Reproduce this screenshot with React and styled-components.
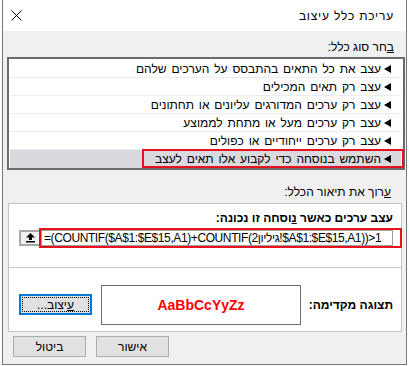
import React from 'react';
import styled, { createGlobalStyle } from 'styled-components';

const GlobalStyle = createGlobalStyle`
  html, body {
    margin: 0;
    padding: 0;
    background: #ffffff;
  }
  body {
    font-family: "Liberation Sans", Arial, sans-serif;
    font-size: 12px;
    color: #000;
  }
`;

const ruleTypes = [
  'עצב את כל התאים בהתבסס על הערכים שלהם',
  'עצב רק תאים המכילים',
  'עצב רק ערכים המדורגים עליונים או תחתונים',
  'עצב רק ערכים מעל או מתחת לממוצע',
  'עצב רק ערכים ייחודיים או כפולים',
  'השתמש בנוסחה כדי לקבוע אלו תאים לעצב',
];

const Screen = styled.div`
  width: 409px;
  height: 366px;
  overflow: hidden;
  padding-left: 2px;
  box-sizing: border-box;
  background: #fff;
`;

const Dialog = styled.div`
  direction: rtl;
  width: 405px;
  height: 365px;
  box-sizing: border-box;
  border: 1px solid #777777;
  border-top: none;
  background: #f0f0f0;
  display: flex;
  flex-direction: column;
`;

const TitleBar = styled.div`
  height: 31px;
  flex-shrink: 0;
  background: #ffffff;
  display: flex;
  align-items: center;
  justify-content: space-between;
  padding: 0 12px 0 8px;
`;

const Title = styled.span`
  font-size: 12px;
  line-height: 16px;
  letter-spacing: 0.8px;
`;

const CloseIcon = () => (
  <svg width="11" height="11" viewBox="0 0 11 11">
    <path d="M0.5 0.5 L10.5 10.5 M10.5 0.5 L0.5 10.5" stroke="#000" strokeWidth="1" />
  </svg>
);

const SectionLabel = styled.div`
  line-height: 16px;
  margin: ${p => p.top}px ${p => p.right}px 0 0;
`;

const ListBox = styled.div`
  margin: 2px 1px 0 4px;
  height: 113px;
  box-sizing: border-box;
  border: 2px solid #6b6b6b;
  background: #ffffff;
  padding: 1px 2px 0 1px;
`;

const Row = styled.div`
  height: 18px;
  box-sizing: border-box;
  display: flex;
  align-items: stretch;
  background: ${p => (p.selected ? '#d9d9de' : 'transparent')};
  border-bottom: 1px solid ${p => (p.last ? 'transparent' : '#ededed')};
`;

const Item = styled.span`
  display: inline-flex;
  align-items: center;
  gap: 3px;
  box-sizing: border-box;
  height: 19px;
  margin: -1px -3px 0 0;
  padding: 0 11px;
  border: 2px solid ${p => (p.marked ? '#e8121f' : 'transparent')};
  white-space: nowrap;
  word-spacing: 1.5px;
`;

const Bullet = styled.span`
  width: 0;
  height: 0;
  border-top: 4px solid transparent;
  border-bottom: 4px solid transparent;
  border-right: 7px solid #000;
`;

const Panel = styled.div`
  margin: 3px 4px 0 5px;
  height: 129px;
  box-sizing: border-box;
  border: 1px solid #c2c2c2;
  background: #ffffff;
  display: flex;
  flex-direction: column;
`;

const PanelTop = styled.div`
  padding: 6px 8px 0 10px;
  height: 64px;
  box-sizing: border-box;
  border-bottom: 1px solid #c8c8c8;
`;

const Bold = styled.div`
  font-weight: bold;
  line-height: 16px;
`;

const FormulaRow = styled.div`
  position: relative;
  margin: 4px 0 0 0;
  display: flex;
  height: 16px;
`;

const FormulaInput = styled.div`
  flex: 1;
  min-width: 0;
  direction: ltr;
  box-sizing: border-box;
  border: 1px solid #a0a0a0;
  background: #fff;
  padding-left: 2px;
  line-height: 14px;
  letter-spacing: -0.4px;
  white-space: nowrap;
  overflow: hidden;
`;

const CollapseButton = styled.div`
  width: 22px;
  flex-shrink: 0;
  box-sizing: border-box;
  border: 2px solid #a8a8a8;
  background: #f0f0f0;
  display: flex;
  align-items: center;
  justify-content: center;
`;

const Highlight = styled.span`
  position: absolute;
  top: -2px;
  bottom: -2px;
  right: -9px;
  left: 20px;
  border: 2px solid #e8121f;
  pointer-events: none;
`;

const PanelBottom = styled.div`
  flex: 1;
  display: flex;
  align-items: flex-start;
  padding: 17px 8px 0 10px;
`;

const PreviewLabel = styled.div`
  width: 92px;
  height: 40px;
  display: flex;
  align-items: center;
  font-weight: bold;
`;

const Preview = styled.div`
  width: 200px;
  height: 40px;
  box-sizing: border-box;
  border: 1px solid #6d6d6d;
  display: flex;
  align-items: center;
  justify-content: center;
  color: #ff0000;
  font-weight: bold;
  font-size: 14px;
  direction: ltr;
`;

const Button = styled.div`
  width: 73px;
  height: 21px;
  box-sizing: border-box;
  border: 1px solid ${p => (p.focused ? '#0078d7' : '#adadad')};
  box-shadow: ${p => (p.focused ? 'inset 0 0 0 1px #0078d7' : 'none')};
  outline: ${p => (p.focused ? '1px dotted #000' : 'none')};
  outline-offset: -4px;
  background: #e1e1e1;
  display: flex;
  align-items: center;
  justify-content: center;
  line-height: 14px;
`;

const FormatButton = styled(Button)`
  margin-right: 9px;
  margin-top: 9px;
`;

const Footer = styled.div`
  display: flex;
  justify-content: flex-end;
  gap: 10px;
  margin-top: 4px;
  padding-left: 10px;
`;

const UpArrowIcon = () => (
  <svg width="9" height="10" viewBox="0 0 9 10">
    <path d="M4.5 0 L9 4.5 L6 4.5 L6 7 L3 7 L3 4.5 L0 4.5 Z" fill="#000" />
    <rect x="0" y="8" width="9" height="1.5" fill="#000" />
  </svg>
);

export default function App() {
  return (
    <Screen>
      <GlobalStyle />
      <Dialog>
        <TitleBar>
          <Title>עריכת כלל עיצוב</Title>
          <CloseIcon />
        </TitleBar>

        <SectionLabel top={8} right={12}>
          <u>ב</u>חר סוג כלל:
        </SectionLabel>
        <ListBox>
          {ruleTypes.map((text, i) => {
            const selected = i === ruleTypes.length - 1;
            return (
              <Row key={i} selected={selected} last={selected}>
                <Item marked={selected}>
                  <Bullet />
                  <span>{text}</span>
                </Item>
              </Row>
            );
          })}
        </ListBox>

        <SectionLabel top={14} right={15}>
          <u>ע</u>רוך את תיאור הכלל:
        </SectionLabel>
        <Panel>
          <PanelTop>
            <Bold>
              עצב ערכים כאשר <u>נ</u>וסחה זו נכונה:
            </Bold>
            <FormulaRow>
              <FormulaInput>=(COUNTIF($A$1:$E$15,A1)+COUNTIF(גיליון2!$A$1:$E$15,A1))&gt;1</FormulaInput>
              <CollapseButton>
                <UpArrowIcon />
              </CollapseButton>
              <Highlight />
            </FormulaRow>
          </PanelTop>
          <PanelBottom>
            <PreviewLabel>תצוגה מקדימה:</PreviewLabel>
            <Preview>AaBbCcYyZz</Preview>
            <FormatButton focused>
              <span><u>ע</u>יצוב...</span>
            </FormatButton>
          </PanelBottom>
        </Panel>

        <Footer>
          <Button>אישור</Button>
          <Button>ביטול</Button>
        </Footer>
      </Dialog>
    </Screen>
  );
}
